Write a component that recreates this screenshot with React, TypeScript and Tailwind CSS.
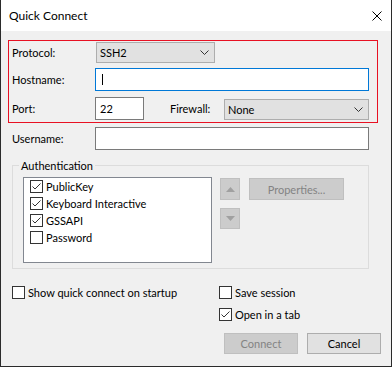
import { ReactNode } from "react";

const FONT = "font-['Segoe_UI','Lato',sans-serif]";

function Chevron() {
  return (
    <svg width="9" height="5" viewBox="0 0 9 5" className="shrink-0">
      <polyline points="0.5,0.5 4.5,4.5 8.5,0.5" fill="none" stroke="#333" strokeWidth="1" />
    </svg>
  );
}

function Select({ value, className }: { value: string; className: string }) {
  return (
    <div
      className={`flex h-[21px] items-center justify-between border border-[#adadad] bg-[#e1e1e1] pl-[3px] pr-[5px] text-[11px] text-black ${className}`}
    >
      <span>{value}</span>
      <Chevron />
    </div>
  );
}

function Check({ checked }: { checked?: boolean }) {
  return (
    <span className="flex h-[13px] w-[13px] shrink-0 items-center justify-center border border-[#333] bg-white">
      {checked && (
        <svg width="11" height="11" viewBox="0 0 11 11">
          <polyline points="1.5,5.5 4,8 9.5,2.5" fill="none" stroke="#333" strokeWidth="1" />
        </svg>
      )}
    </span>
  );
}

function CheckRow({ checked, children }: { checked?: boolean; children: ReactNode }) {
  return (
    <div className="flex h-[17px] items-center gap-[3px] text-[11px] text-black">
      <Check checked={checked} />
      <span className="whitespace-nowrap">{children}</span>
    </div>
  );
}

function Label({ children, className = "" }: { children: ReactNode; className?: string }) {
  return <span className={`shrink-0 text-[11px] text-black ${className}`}>{children}</span>;
}

export default function App() {
  return (
    <div
      className={`${FONT} flex h-[367px] w-[392px] flex-col border-x border-b border-[#2b2b2b] bg-[#f0f0f0] leading-none`}
    >
      {/* title bar */}
      <div className="flex h-[31px] items-center justify-between bg-white pl-2 pr-[9px]">
        <span className="text-[12px] text-black">Quick Connect</span>
        <svg width="10" height="10" viewBox="0 0 10 10">
          <path d="M0.5 0.5 L9.5 9.5 M9.5 0.5 L0.5 9.5" stroke="#000" strokeWidth="1" />
        </svg>
      </div>

      {/* highlighted connection fields */}
      <div className="ml-[7px] mt-[9px] flex h-[83px] w-[370px] flex-col border border-[#e81123] pl-[3px]">
        <div className="mt-[1px] flex items-center">
          <Label className="w-[84px]">Protocol:</Label>
          <Select value="SSH2" className="w-[119px]" />
        </div>
        <div className="mt-[5px] flex items-center">
          <Label className="w-[83px]">Hostname:</Label>
          <div className="flex h-[23px] w-[274px] items-center border border-[#0078d7] bg-white pl-[6px]">
            <span className="h-[11px] w-px bg-black" />
          </div>
        </div>
        <div className="mt-[6px] flex items-end">
          <Label className="mb-[6px] w-[83px]">Port:</Label>
          <div className="flex h-[23px] w-[49px] items-center border border-[#7a7a7a] bg-white pl-[4px] text-[11px]">
            22
          </div>
          <Label className="mb-[6px] ml-[26px] w-[54px]">Firewall:</Label>
          <Select value="None" className="w-[145px]" />
        </div>
      </div>

      {/* username */}
      <div className="ml-[11px] mt-[4px] flex items-center">
        <Label className="w-[83px]">Username:</Label>
        <div className="h-[23px] w-[274px] border border-[#7a7a7a] bg-white" />
      </div>

      {/* authentication group */}
      <div className="relative ml-[11px] mt-[15px] w-[357px] border border-[#dcdcdc] pb-[5px] pl-[10px] pt-[11px]">
        <span className="absolute left-[6px] top-[-6px] bg-[#f0f0f0] px-[2px] text-[11px] text-black">
          Authentication
        </span>
        <div className="flex items-start">
          <div className="h-[86px] w-[189px] border border-[#828790] bg-white pl-[6px]">
            <CheckRow checked>PublicKey</CheckRow>
            <CheckRow checked>Keyboard Interactive</CheckRow>
            <CheckRow checked>GSSAPI</CheckRow>
            <CheckRow>Password</CheckRow>
          </div>
          <div className="ml-[8px] mt-[1px] flex flex-col gap-[8px]">
            <div className="flex h-[22px] w-[20px] items-center justify-center border border-[#bfbfbf] bg-[#cccccc]">
              <svg width="9" height="5" viewBox="0 0 9 5">
                <polygon points="4.5,0 9,5 0,5" fill="#a0a0a0" />
              </svg>
            </div>
            <div className="flex h-[21px] w-[20px] items-center justify-center border border-[#bfbfbf] bg-[#cccccc]">
              <svg width="9" height="5" viewBox="0 0 9 5">
                <polygon points="0,0 9,0 4.5,5" fill="#a0a0a0" />
              </svg>
            </div>
          </div>
          <div className="ml-[9px] mt-[1px] flex h-[22px] w-[95px] items-center justify-center border border-[#bfbfbf] bg-[#cccccc] text-[11px] text-[#838383]">
            Properties...
          </div>
        </div>
      </div>

      {/* options */}
      <div className="ml-[11px] mt-[15px] flex">
        <div className="w-[207px] shrink-0">
          <CheckRow>Show quick connect on startup</CheckRow>
        </div>
        <div className="flex flex-col gap-[5px]">
          <CheckRow>Save session</CheckRow>
          <CheckRow checked>Open in a tab</CheckRow>
        </div>
      </div>

      {/* buttons */}
      <div className="mr-[10px] mt-[10px] flex justify-end gap-[9px]">
        <div className="flex h-[21px] w-[74px] items-center justify-center border border-[#bfbfbf] bg-[#cccccc] text-[11px] text-[#838383]">
          Connect
        </div>
        <div className="flex h-[21px] w-[74px] items-center justify-center border border-[#adadad] bg-[#e1e1e1] text-[11px] text-black">
          Cancel
        </div>
      </div>
    </div>
  );
}
